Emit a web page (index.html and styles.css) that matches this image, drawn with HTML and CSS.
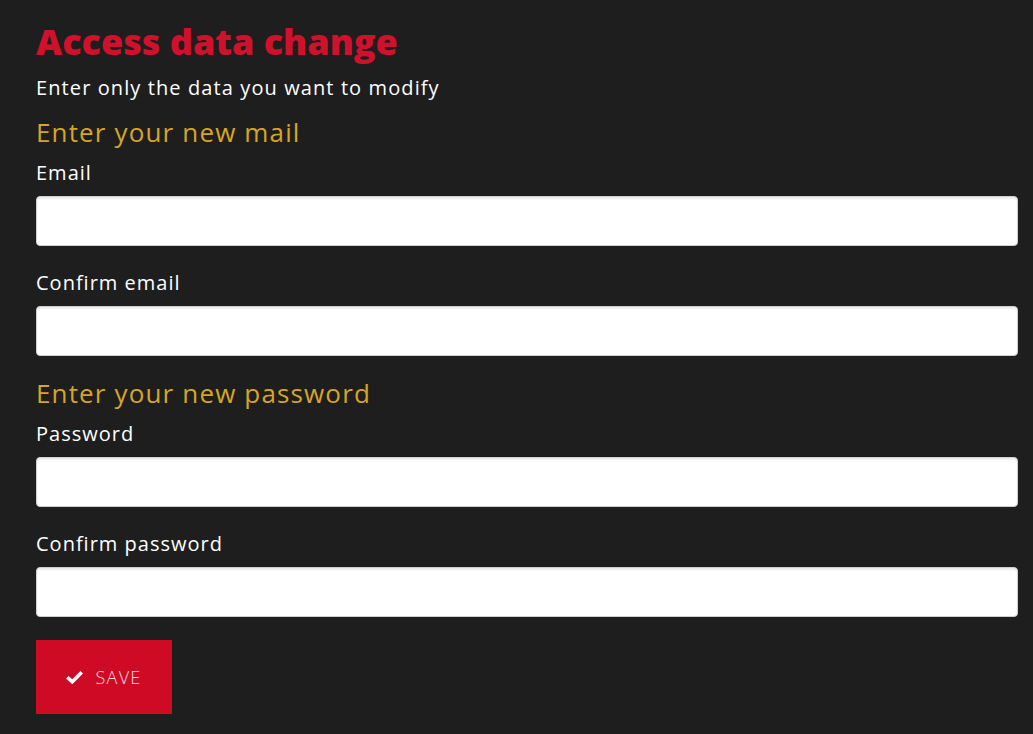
FILE: index.html
```html
<!DOCTYPE html>
<html lang="en">
<head>
<meta charset="utf-8">
<title>Access data change</title>
<link rel="stylesheet" href="styles.css">
</head>
<body>
<main class="page">
  <h1 class="title">Access data change</h1>
  <p class="intro">Enter only the data you want to modify</p>
  <form class="form">
    <h2 class="section">Enter your new mail</h2>
    <div class="field">
      <label class="label" for="email">Email</label>
      <input class="input" id="email" type="email">
    </div>
    <div class="field">
      <label class="label" for="email2">Confirm email</label>
      <input class="input" id="email2" type="email">
    </div>
    <h2 class="section">Enter your new password</h2>
    <div class="field">
      <label class="label" for="pw">Password</label>
      <input class="input" id="pw" type="password">
    </div>
    <div class="field">
      <label class="label" for="pw2">Confirm password</label>
      <input class="input" id="pw2" type="password">
    </div>
    <button class="save" type="button">
      <svg class="check" width="17" height="14" viewBox="0 0 17 14"><path d="M1.3 7.2 L6.3 11.8 L15.7 2.2" fill="none" stroke="#fff" stroke-width="3.6" stroke-linejoin="miter" stroke-linecap="butt"/></svg>
      <span>SAVE</span>
    </button>
  </form>
</main>
</body>
</html>
```
FILE: styles.css
```css
html, body {
  margin: 0;
  padding: 0;
  background: #1e1e1e;
}
.page {
  padding: 20px 15px 20px 36px;
  font-family: "Open Sans", "Liberation Sans", sans-serif;
  color: #fff;
}
.title {
  margin: 0;
  font-size: 36px;
  line-height: 44px;
  font-weight: 800;
  color: #d0112b;
}
.intro {
  margin: 12px 0 0;
  font-size: 20px;
  line-height: 24px;
  letter-spacing: 1.1px;
}
.form {
  display: flex;
  flex-direction: column;
}
.section {
  margin: 16px 0 0;
  font-size: 26px;
  line-height: 32px;
  font-weight: 400;
  letter-spacing: 1.15px;
  color: #d6a526;
}
.form .field + .section {
  margin-top: 21px;
}
.field {
  display: flex;
  flex-direction: column;
  margin-top: 13px;
}
.field + .field {
  margin-top: 25px;
}
.label {
  font-size: 20px;
  line-height: 24px;
  letter-spacing: 1px;
  margin-bottom: 11px;
}
.input {
  height: 50px;
  box-sizing: border-box;
  border: 1px solid #cfcfcf;
  border-radius: 4px;
  background: #fff;
  box-shadow: inset 0 2px 2px rgba(0,0,0,0.08);
  margin: 0;
}
.save {
  align-self: flex-start;
  margin-top: 23px;
  width: 136px;
  height: 74px;
  border: 0;
  border-radius: 0;
  background: #cf0a24;
  color: #f4dde0;
  font-family: inherit;
  font-size: 18px;
  font-weight: 300;
  letter-spacing: 1.3px;
  display: flex;
  align-items: center;
  justify-content: center;
  gap: 12px;
  padding: 0;
}
```
